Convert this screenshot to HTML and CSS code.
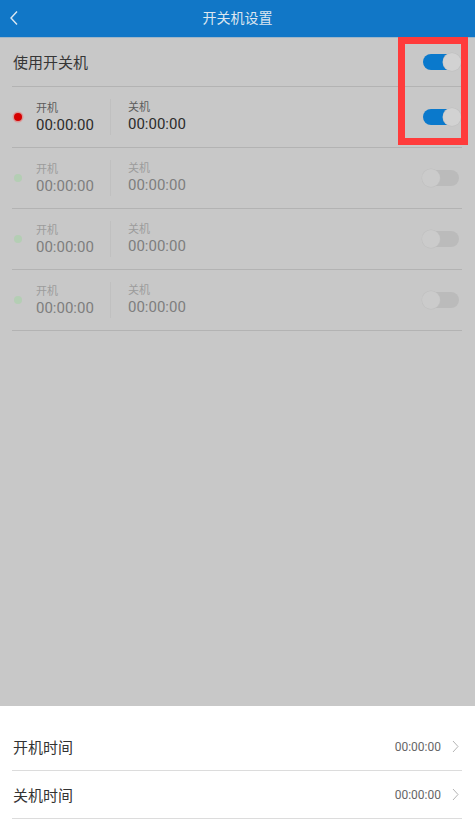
FILE: index.html
```html
<!DOCTYPE html>
<html>
<head>
  <meta charset="utf-8">
  <title>开关机设置</title>
  <link rel="stylesheet" href="styles.css">
</head>
<body>

<div class="page">

  <div class="topbar">
    <svg class="back" width="10" height="16" viewBox="0 0 10 16">
      <path d="M8 1.5 L2 8 L8 14.5" fill="none" stroke="#dde8f2" stroke-width="1.4"/>
    </svg>
    <div class="title">开关机设置</div>
  </div>

  <div class="shade">
    <div class="list">

      <div class="row main-row">
        <span class="main-label">使用开关机</span>
        <span class="switch on"><span class="knob"></span></span>
      </div>

      <div class="row timer">
        <span class="dot red"></span>
        <div class="col">
          <div class="lab">开机</div>
          <div class="time">00:00:00</div>
        </div>
        <div class="col right">
          <div class="lab">关机</div>
          <div class="time">00:00:00</div>
        </div>
        <span class="switch on"><span class="knob"></span></span>
      </div>

      <div class="row timer off">
        <span class="dot green"></span>
        <div class="col">
          <div class="lab">开机</div>
          <div class="time">00:00:00</div>
        </div>
        <div class="col right">
          <div class="lab">关机</div>
          <div class="time">00:00:00</div>
        </div>
        <span class="switch"><span class="knob"></span></span>
      </div>

      <div class="row timer off">
        <span class="dot green"></span>
        <div class="col">
          <div class="lab">开机</div>
          <div class="time">00:00:00</div>
        </div>
        <div class="col right">
          <div class="lab">关机</div>
          <div class="time">00:00:00</div>
        </div>
        <span class="switch"><span class="knob"></span></span>
      </div>

      <div class="row timer off">
        <span class="dot green"></span>
        <div class="col">
          <div class="lab">开机</div>
          <div class="time">00:00:00</div>
        </div>
        <div class="col right">
          <div class="lab">关机</div>
          <div class="time">00:00:00</div>
        </div>
        <span class="switch"><span class="knob"></span></span>
      </div>

    </div>

    <div class="mark"></div>
  </div>

  <div class="sheet">
    <div class="sheet-row">
      <span class="sheet-label">开机时间</span>
      <span class="sheet-value">00:00:00</span>
      <svg class="chev" width="7" height="13" viewBox="0 0 7 13">
        <path d="M1 1 L6 6.5 L1 12" fill="none" stroke="#b5b5b5" stroke-width="1"/>
      </svg>
    </div>
    <div class="sheet-row">
      <span class="sheet-label">关机时间</span>
      <span class="sheet-value">00:00:00</span>
      <svg class="chev" width="7" height="13" viewBox="0 0 7 13">
        <path d="M1 1 L6 6.5 L1 12" fill="none" stroke="#b5b5b5" stroke-width="1"/>
      </svg>
    </div>
  </div>

</div>

</body>
</html>
```

FILE: styles.css
```css
html, body
{
  margin: 0;
  padding: 0;
}

body
{
  font-family: Roboto, "Noto Sans CJK SC", sans-serif;
  background: #ffffff;
}

.page
{
  width: 475px;
  height: 833px;
  display: flex;
  flex-direction: column;
  overflow: hidden;
}

.topbar
{
  height: 38px;
  flex: none;
  background: #1177c7;
  border-bottom: 1px solid #9fb6c8;
  box-sizing: border-box;
  display: flex;
  align-items: center;
  justify-content: center;
  position: relative;
}

.back
{
  position: absolute;
  left: 9px;
  top: 10px;
}

.title
{
  color: #dce6f0;
  font-size: 14px;
  margin-top: -3px;
}

.shade
{
  flex: 1;
  background: #c8c8c8;
  position: relative;
}

.list
{
  padding: 0 13px 0 12px;
}

.row
{
  display: flex;
  align-items: center;
  border-bottom: 1px solid #b3b3b3;
}

.main-row
{
  height: 48px;
  justify-content: space-between;
}

.main-label
{
  font-size: 15px;
  color: #363636;
  margin-left: 1px;
  margin-top: -2px;
}

.timer
{
  height: 60px;
}

.dot
{
  width: 8px;
  height: 8px;
  border-radius: 50%;
  margin: 0 14px 0 2px;
  flex: none;
}

.dot.red
{
  background: #d60000;
  box-shadow: 0 0 0 1.5px #d99a9a;
}

.dot.green
{
  background: #b4ceb4;
}

.col
{
  width: 74px;
  padding-top: 1px;
}

.col.right
{
  border-left: 1px solid #c0c0c0;
  padding-left: 17px;
  height: 36px;
  padding-top: 0;
  display: flex;
  flex-direction: column;
  justify-content: center;
  flex: 1;
}

.lab
{
  font-size: 11px;
  color: #5c5c5c;
  line-height: 15px;
}

.time
{
  font-size: 15px;
  color: #2c2c2c;
  line-height: 19px;
}

.timer.off .lab
{
  color: #9c9c9c;
}

.timer.off .time
{
  color: #7e7e7e;
}

.switch
{
  width: 36px;
  height: 16px;
  border-radius: 8px;
  background: #bbbbbb;
  position: relative;
  flex: none;
  margin-left: auto;
  margin-right: 3px;
}

.switch.on
{
  background: #0a79cc;
  width: 37px;
  margin-right: 2px;
}

.knob
{
  position: absolute;
  top: -1px;
  left: -1px;
  width: 18px;
  height: 18px;
  border-radius: 50%;
  background: #cbcbcb;
  box-shadow: 0 0 0 0.5px #bfbfbf;
}

.switch.on .knob
{
  left: auto;
  right: -1px;
  background: #d2d2d2;
}

.mark
{
  position: absolute;
  left: 398px;
  top: -1px;
  width: 70px;
  height: 108px;
  border: 7px solid #ff3b3b;
  box-sizing: border-box;
}

.sheet
{
  height: 127px;
  flex: none;
  background: #ffffff;
  padding: 17px 13px 0 12px;
  box-sizing: border-box;
}

.sheet-row
{
  height: 47px;
  display: flex;
  align-items: center;
  border-bottom: 1px solid #dcdcdc;
}

.sheet-label
{
  font-size: 15px;
  color: #333333;
  margin-left: 1px;
  flex: 1;
}

.sheet-value
{
  font-size: 12px;
  color: #666666;
  margin-right: 11px;
}

.chev
{
  margin-right: 3px;
}
```
